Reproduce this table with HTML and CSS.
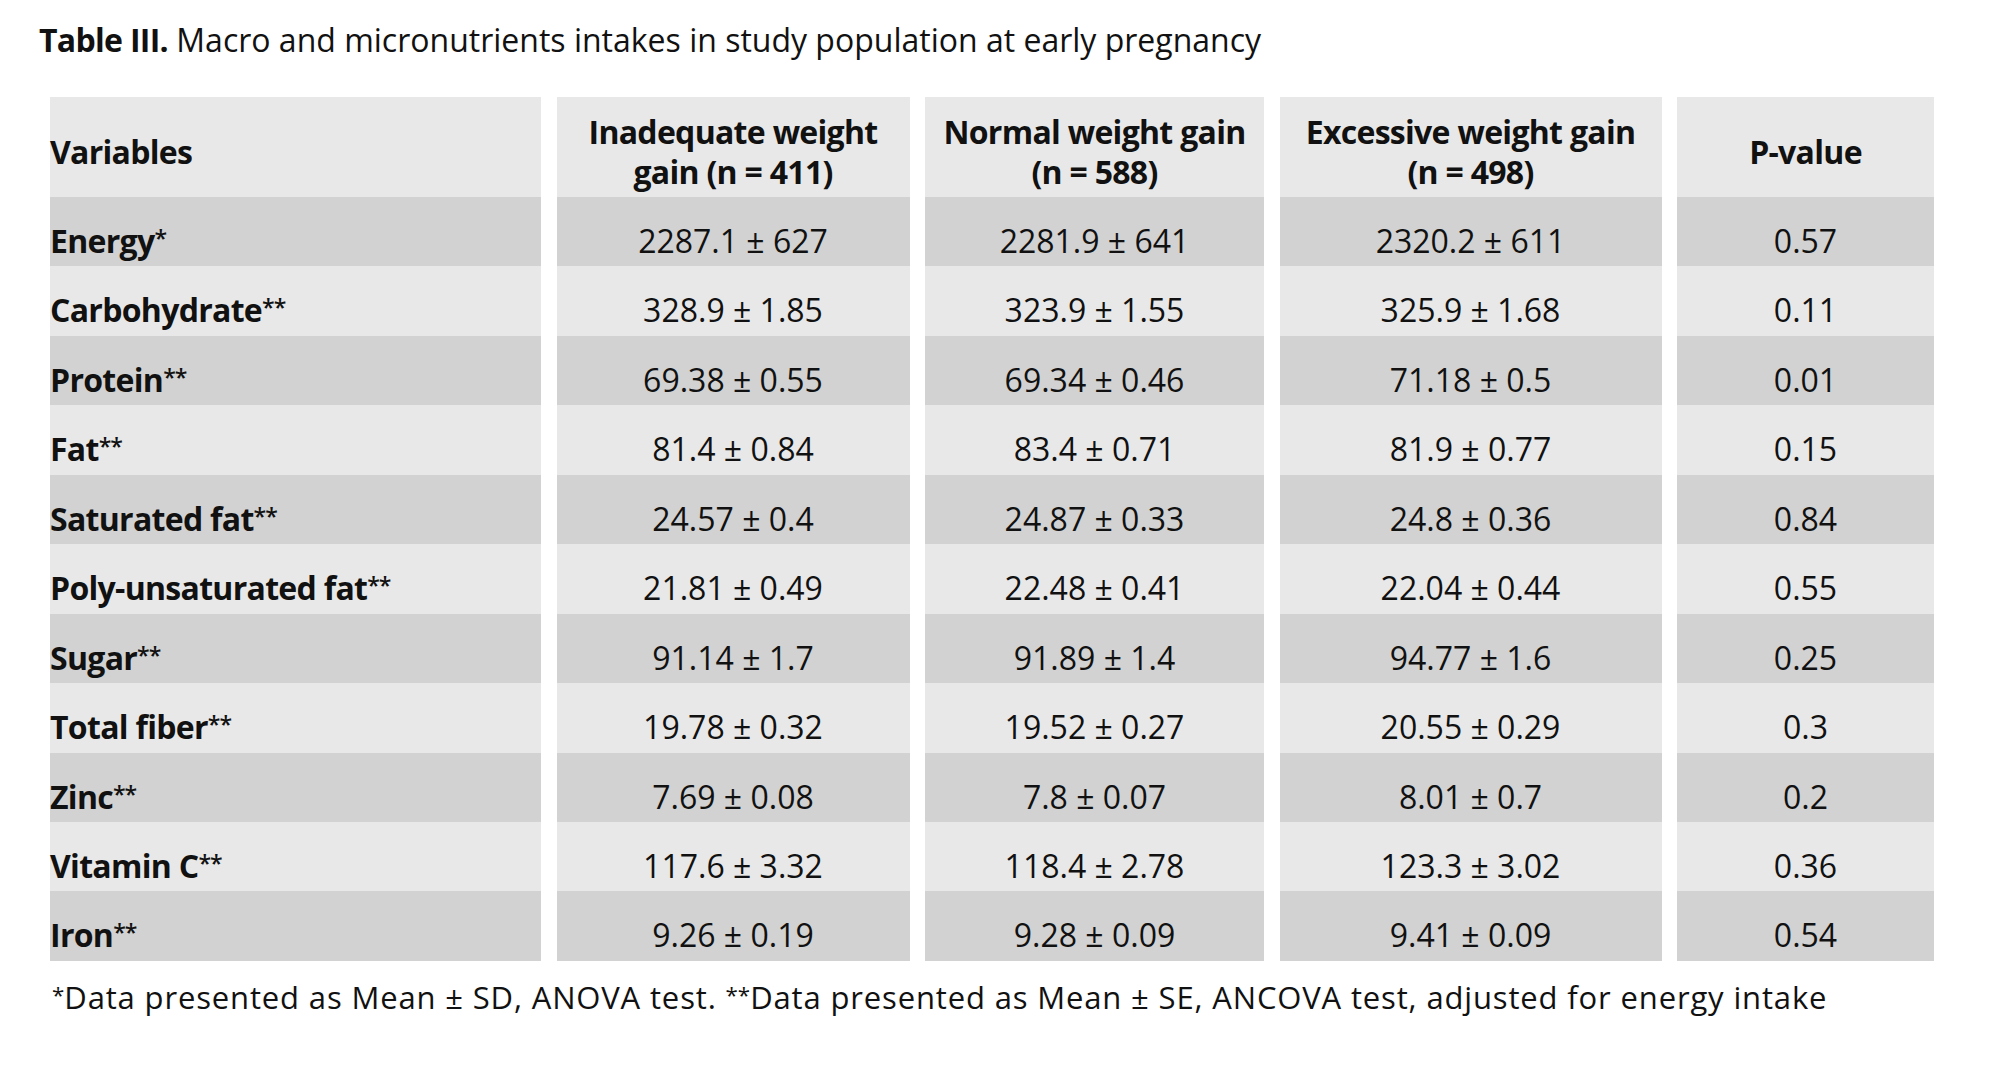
FILE: index.html
```html
<!DOCTYPE html>
<html lang="en">
<head>
<meta charset="utf-8">
<title>Table III</title>
<link rel="stylesheet" href="styles.css">
</head>
<body>
<div class="page">
  <p class="caption"><b>Table III.</b> Macro and micronutrients intakes in study population at early pregnancy</p>
  <div class="table">
    <div class="hcell left">Variables</div>
    <div class="hcell">Inadequate weight<br>gain (n = 411)</div>
    <div class="hcell">Normal weight gain<br>(n = 588)</div>
    <div class="hcell">Excessive weight gain<br>(n = 498)</div>
    <div class="hcell">P-value</div>

    <div class="cell label dark">Energy<span class="ast">*</span></div>
    <div class="cell dark">2287.1 ± 627</div>
    <div class="cell dark">2281.9 ± 641</div>
    <div class="cell dark">2320.2 ± 611</div>
    <div class="cell dark">0.57</div>

    <div class="cell label">Carbohydrate<span class="ast">**</span></div>
    <div class="cell">328.9 ± 1.85</div>
    <div class="cell">323.9 ± 1.55</div>
    <div class="cell">325.9 ± 1.68</div>
    <div class="cell">0.11</div>

    <div class="cell label dark">Protein<span class="ast">**</span></div>
    <div class="cell dark">69.38 ± 0.55</div>
    <div class="cell dark">69.34 ± 0.46</div>
    <div class="cell dark">71.18 ± 0.5</div>
    <div class="cell dark">0.01</div>

    <div class="cell label">Fat<span class="ast">**</span></div>
    <div class="cell">81.4 ± 0.84</div>
    <div class="cell">83.4 ± 0.71</div>
    <div class="cell">81.9 ± 0.77</div>
    <div class="cell">0.15</div>

    <div class="cell label dark">Saturated fat<span class="ast">**</span></div>
    <div class="cell dark">24.57 ± 0.4</div>
    <div class="cell dark">24.87 ± 0.33</div>
    <div class="cell dark">24.8 ± 0.36</div>
    <div class="cell dark">0.84</div>

    <div class="cell label">Poly-unsaturated fat<span class="ast">**</span></div>
    <div class="cell">21.81 ± 0.49</div>
    <div class="cell">22.48 ± 0.41</div>
    <div class="cell">22.04 ± 0.44</div>
    <div class="cell">0.55</div>

    <div class="cell label dark">Sugar<span class="ast">**</span></div>
    <div class="cell dark">91.14 ± 1.7</div>
    <div class="cell dark">91.89 ± 1.4</div>
    <div class="cell dark">94.77 ± 1.6</div>
    <div class="cell dark">0.25</div>

    <div class="cell label">Total fiber<span class="ast">**</span></div>
    <div class="cell">19.78 ± 0.32</div>
    <div class="cell">19.52 ± 0.27</div>
    <div class="cell">20.55 ± 0.29</div>
    <div class="cell">0.3</div>

    <div class="cell label dark">Zinc<span class="ast">**</span></div>
    <div class="cell dark">7.69 ± 0.08</div>
    <div class="cell dark">7.8 ± 0.07</div>
    <div class="cell dark">8.01 ± 0.7</div>
    <div class="cell dark">0.2</div>

    <div class="cell label">Vitamin C<span class="ast">**</span></div>
    <div class="cell">117.6 ± 3.32</div>
    <div class="cell">118.4 ± 2.78</div>
    <div class="cell">123.3 ± 3.02</div>
    <div class="cell">0.36</div>

    <div class="cell label dark">Iron<span class="ast">**</span></div>
    <div class="cell dark">9.26 ± 0.19</div>
    <div class="cell dark">9.28 ± 0.09</div>
    <div class="cell dark">9.41 ± 0.09</div>
    <div class="cell dark">0.54</div>
  </div>
  <p class="note"><span class="ast">*</span>Data presented as Mean ± SD, ANOVA test. <span class="ast">**</span>Data presented as Mean ± SE, ANCOVA test, adjusted for energy intake</p>
</div>
</body>
</html>
```

FILE: styles.css
```css
html, body {
  margin: 0;
  padding: 0;
  background: #ffffff;
}

body {
  font-family: "Open Sans", "Liberation Sans", sans-serif;
  color: #111111;
}

.page {
  padding: 0 0 0 39px;
}

.caption {
  margin: 0;
  padding-top: 20px;
  font-size: 32px;
  line-height: 40px;
  height: 97px;
  box-sizing: border-box;
}

.caption b {
  font-weight: 700;
  letter-spacing: -0.7px;
}

.table {
  margin-left: 11px;
  display: grid;
  grid-template-columns: 491px 353px 339px 382px 257px;
  grid-template-rows: 100px repeat(11, 69.45px);
  column-gap: 15.5px;
  row-gap: 0;
  font-size: 32px;
  line-height: 40px;
}

.hcell {
  background: #e8e8e8;
  font-weight: 700;
  letter-spacing: -0.7px;
  display: flex;
  align-items: center;
  justify-content: center;
  text-align: center;
  padding-top: 10px;
  box-sizing: border-box;
}

.hcell.left {
  justify-content: flex-start;
  text-align: left;
}

.cell {
  background: #e8e8e8;
  text-align: center;
  padding-top: 24px;
  box-sizing: border-box;
  white-space: nowrap;
}

.cell.dark {
  background: #d2d2d2;
}

.cell.label {
  text-align: left;
  font-weight: 700;
  letter-spacing: -0.7px;
}

.ast {
  font-size: 0.72em;
  line-height: 0;
  vertical-align: 0.28em;
  font-weight: 600;
  letter-spacing: -1px;
}

.note {
  margin: 0;
  padding-left: 13px;
  padding-top: 16px;
  font-size: 31px;
  line-height: 40px;
  letter-spacing: 0.85px;
}

.note .ast {
  font-weight: 400;
  letter-spacing: 0;
}
```
